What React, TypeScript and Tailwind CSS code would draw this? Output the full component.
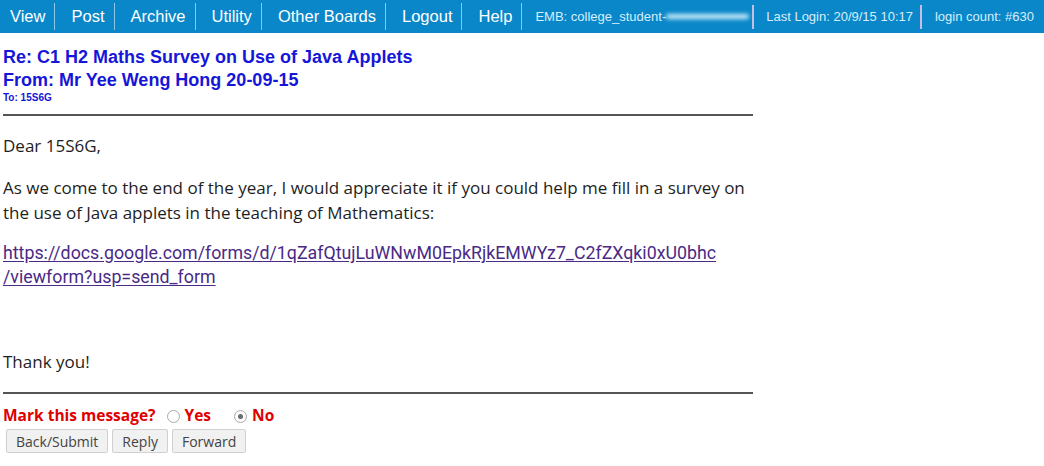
const navItems = ["View", "Post", "Archive", "Utility", "Other Boards", "Logout", "Help"];

const Radio = ({ checked }: { checked?: boolean }) => (
    <span className="inline-flex items-center justify-center w-[13px] h-[13px] rounded-full border border-[#a9a9a9] bg-white mr-[5px]">
        {checked && <span className="w-[5px] h-[5px] rounded-full bg-[#6b6b6b]" />}
    </span>
);

const App = () => {
    return (
        <div className="w-[1044px] h-[466px] bg-white overflow-hidden">
            {/* top nav bar */}
            <div className="h-[33px] bg-[#0a87c9] flex items-center whitespace-nowrap font-['Liberation_Sans',Arial,sans-serif] text-white">
                {navItems.map((item, i) => (
                    <div
                        key={item}
                        className={`shrink-0 flex items-center h-[27px] border-r border-[#8cc6e8] pr-[9px] text-[16.5px] ${i === 0 ? "pl-[10px]" : "pl-[16px]"}`}
                    >
                        {item}
                    </div>
                ))}
                <div className="shrink-0 flex items-center pl-[13px] text-[13px] text-[#d6eefb]">
                    <span>EMB: college_student-</span>
                    <span className="w-[83px] h-[5px] bg-[#c9ecf7] blur-[2px] rounded-full" />
                </div>
                <div className="shrink-0 flex items-center h-[24px] border-l-2 border-[#c6bde6] ml-[3px] pl-[12px] pr-[7px] text-[13px] text-[#d6eefb]">
                    Last Login: 20/9/15 10:17
                </div>
                <div className="shrink-0 flex items-center h-[24px] border-l-2 border-[#c6bde6] pl-[13px] text-[13px] text-[#d6eefb]">
                    login count: #630
                </div>
            </div>

            <div className="pl-[3px] w-[753px]">
                {/* header */}
                <div className="pt-[13px] font-['Liberation_Sans',Arial,sans-serif] font-bold text-[#1616d8] whitespace-nowrap">
                    <div className="text-[18px] leading-[23px]">Re: C1 H2 Maths Survey on Use of Java Applets</div>
                    <div className="text-[18px] leading-[23px]">From: Mr Yee Weng Hong 20-09-15</div>
                    <div className="text-[10px] leading-[12px]">To: 15S6G</div>
                </div>
                <div className="mt-[10px] border-t-2 border-[#555555]" />

                {/* message body */}
                <div className="font-['Open_Sans',sans-serif] text-[17px] text-[#1e1e1e] whitespace-nowrap">
                    <p className="mt-[17px] leading-[25px]">Dear 15S6G,</p>
                    <p className="mt-[17px] leading-[25px]">
                        As we come to the end of the year, I would appreciate it if you could help me fill in a survey on
                        <br />
                        the use of Java applets in the teaching of Mathematics:
                    </p>
                    <p className="mt-[16px] leading-[24px] font-['Roboto',sans-serif] text-[17.8px]">
                        <a href="#" className="text-[#4a2a86] underline underline-offset-2">
                            https://docs.google.com/forms/d/1qZafQtujLuWNwM0EpkRjkEMWYz7_C2fZXqki0xU0bhc
                            <br />
                            /viewform?usp=send_form
                        </a>
                    </p>
                    <p className="mt-[60px] leading-[25px]">Thank you!</p>
                </div>
                <div className="mt-[18px] border-t-2 border-[#555555]" />

                {/* footer */}
                <div className="mt-[12px] flex items-center h-[20px] font-['Open_Sans',sans-serif] font-bold text-[15.5px] text-[#e00000]">
                    <span>Mark this message?</span>
                    <span className="ml-[11px] flex items-center"><Radio />Yes</span>
                    <span className="ml-[23px] flex items-center"><Radio checked />No</span>
                </div>
                <div className="mt-[3px] flex gap-[4px] pl-[3px] font-['Open_Sans',sans-serif] text-[14px] text-[#444444]">
                    <button className="h-[24px] px-[9px] border border-[#d0d0d0] rounded-[2px] bg-[#f1f1f1]">Back/Submit</button>
                    <button className="h-[24px] px-[9px] border border-[#d0d0d0] rounded-[2px] bg-[#f1f1f1]">Reply</button>
                    <button className="h-[24px] px-[9px] border border-[#d0d0d0] rounded-[2px] bg-[#f1f1f1]">Forward</button>
                </div>
            </div>
        </div>
    );
};

export default App;
